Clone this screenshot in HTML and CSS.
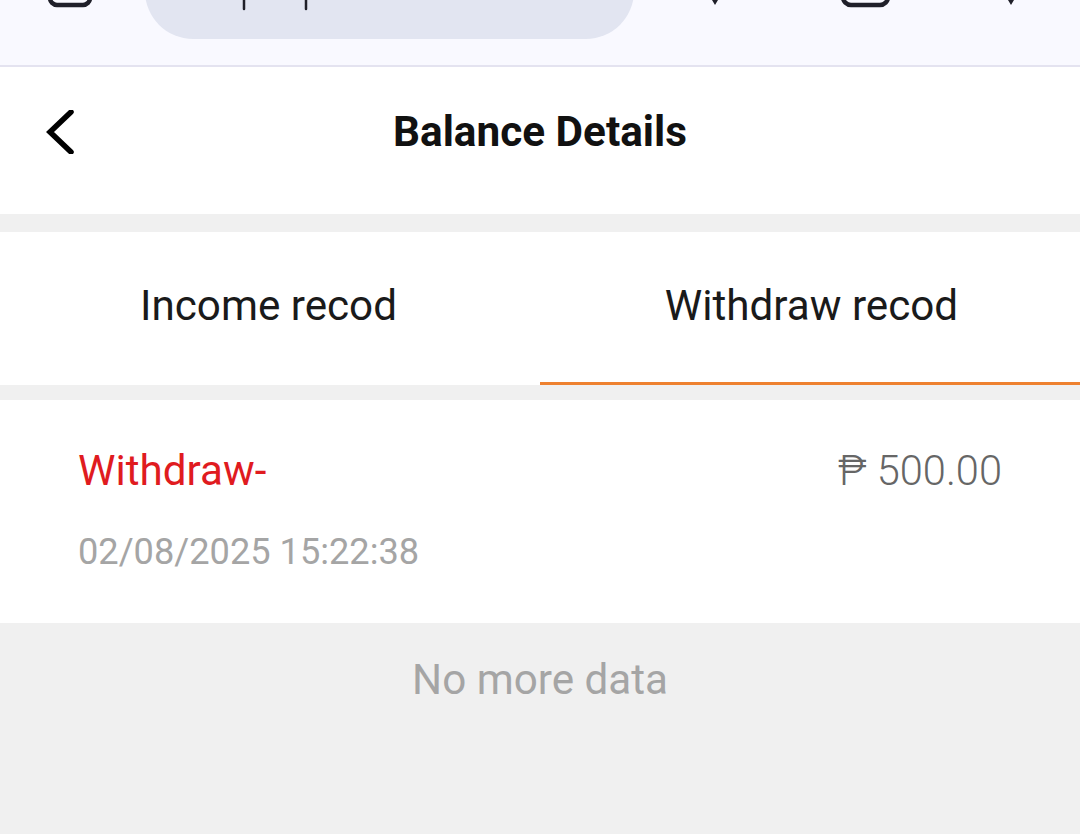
FILE: index.html
```html
<!DOCTYPE html>
<html lang="en">
<head>
<meta charset="UTF-8">
<meta name="viewport" content="width=device-width, initial-scale=1.0">
<title>Balance Details</title>
<link rel="stylesheet" href="styles.css">
</head>
<body>
<div class="browser-bar">
  <svg class="browser-icons" width="1080" height="65" viewBox="0 0 1080 65" fill="none">
    <rect x="50" y="-30" width="40" height="35" rx="7" stroke="#20202a" stroke-width="4.5"/>
    <rect x="145" y="-60" width="489" height="99" rx="48" fill="#e2e5f1"/>
    <path d="M244 0V9M306 0V9" stroke="#20202a" stroke-width="2.5" stroke-linecap="round"/>
    <path d="M712 0H718L715 5ZM1008 0H1014L1011 5Z" fill="#20202a"/>
    <rect x="843" y="-30" width="45" height="35" rx="8" stroke="#20202a" stroke-width="4.5"/>
  </svg>
</div>

<header class="title-bar">
  <svg class="back-icon" width="28" height="44" viewBox="0 0 28 44" fill="none">
    <path d="M25 2 L4 22 L25 42" stroke="#000" stroke-width="5.5" stroke-linecap="round" stroke-linejoin="miter"/>
  </svg>
  <h1>Balance Details</h1>
</header>

<nav class="tabs">
  <div class="tab">Income recod</div>
  <div class="tab active">Withdraw recod</div>
</nav>

<section class="record">
  <div class="record-top">
    <span class="record-type">Withdraw-</span>
    <span class="record-amount">₱ 500.00</span>
  </div>
  <div class="record-date">02/08/2025 15:22:38</div>
</section>

<p class="no-more">No more data</p>
</body>
</html>
```

FILE: styles.css
```css
body {
  font-family: Roboto, "Liberation Sans", sans-serif;
  margin: 0;
  height: 834px;
  overflow: hidden;
  background-color: #f0f0f0;
}

.browser-bar {
  height: 65px;
  background-color: #f9f9ff;
  border-bottom: 2px solid #e4e3f0;
}

.browser-icons {
  display: block;
}

.title-bar {
  height: 129px;
  padding-bottom: 18px;
  background-color: #fff;
  position: relative;
  display: flex;
  align-items: center;
  justify-content: center;
}

.title-bar h1 {
  margin: 0;
  font-size: 42.3px;
  font-weight: 700;
  color: #111;
}

.back-icon {
  position: absolute;
  left: 46px;
  top: 43px;
}

.tabs {
  display: flex;
  height: 153px;
  margin-top: 18px;
  background-color: #fff;
}

.tab {
  flex: 1;
  display: flex;
  align-items: center;
  justify-content: center;
  padding-right: 3px;
  padding-bottom: 6px;
  font-size: 42.2px;
  color: #1a1a1a;
}

.tab.active {
  border-bottom: 3px solid #ee8130;
  padding-left: 3px;
  padding-right: 0;
  padding-bottom: 3px;
}

.record {
  height: 223px;
  margin-top: 15px;
  padding: 0 78px;
  background-color: #fff;
}

.record-top {
  display: flex;
  justify-content: space-between;
  align-items: center;
  padding-top: 46px;
}

.record-type {
  font-size: 42.2px;
  color: #e01b1f;
}

.record-amount {
  font-size: 41.6px;
  font-weight: 300;
  color: #666;
}

.record-date {
  margin-top: 35px;
  font-size: 36.2px;
  color: #a5a5a5;
}

.no-more {
  margin: 32px 0 0;
  text-align: center;
  font-size: 42.2px;
  color: #a5a5a5;
}
```
